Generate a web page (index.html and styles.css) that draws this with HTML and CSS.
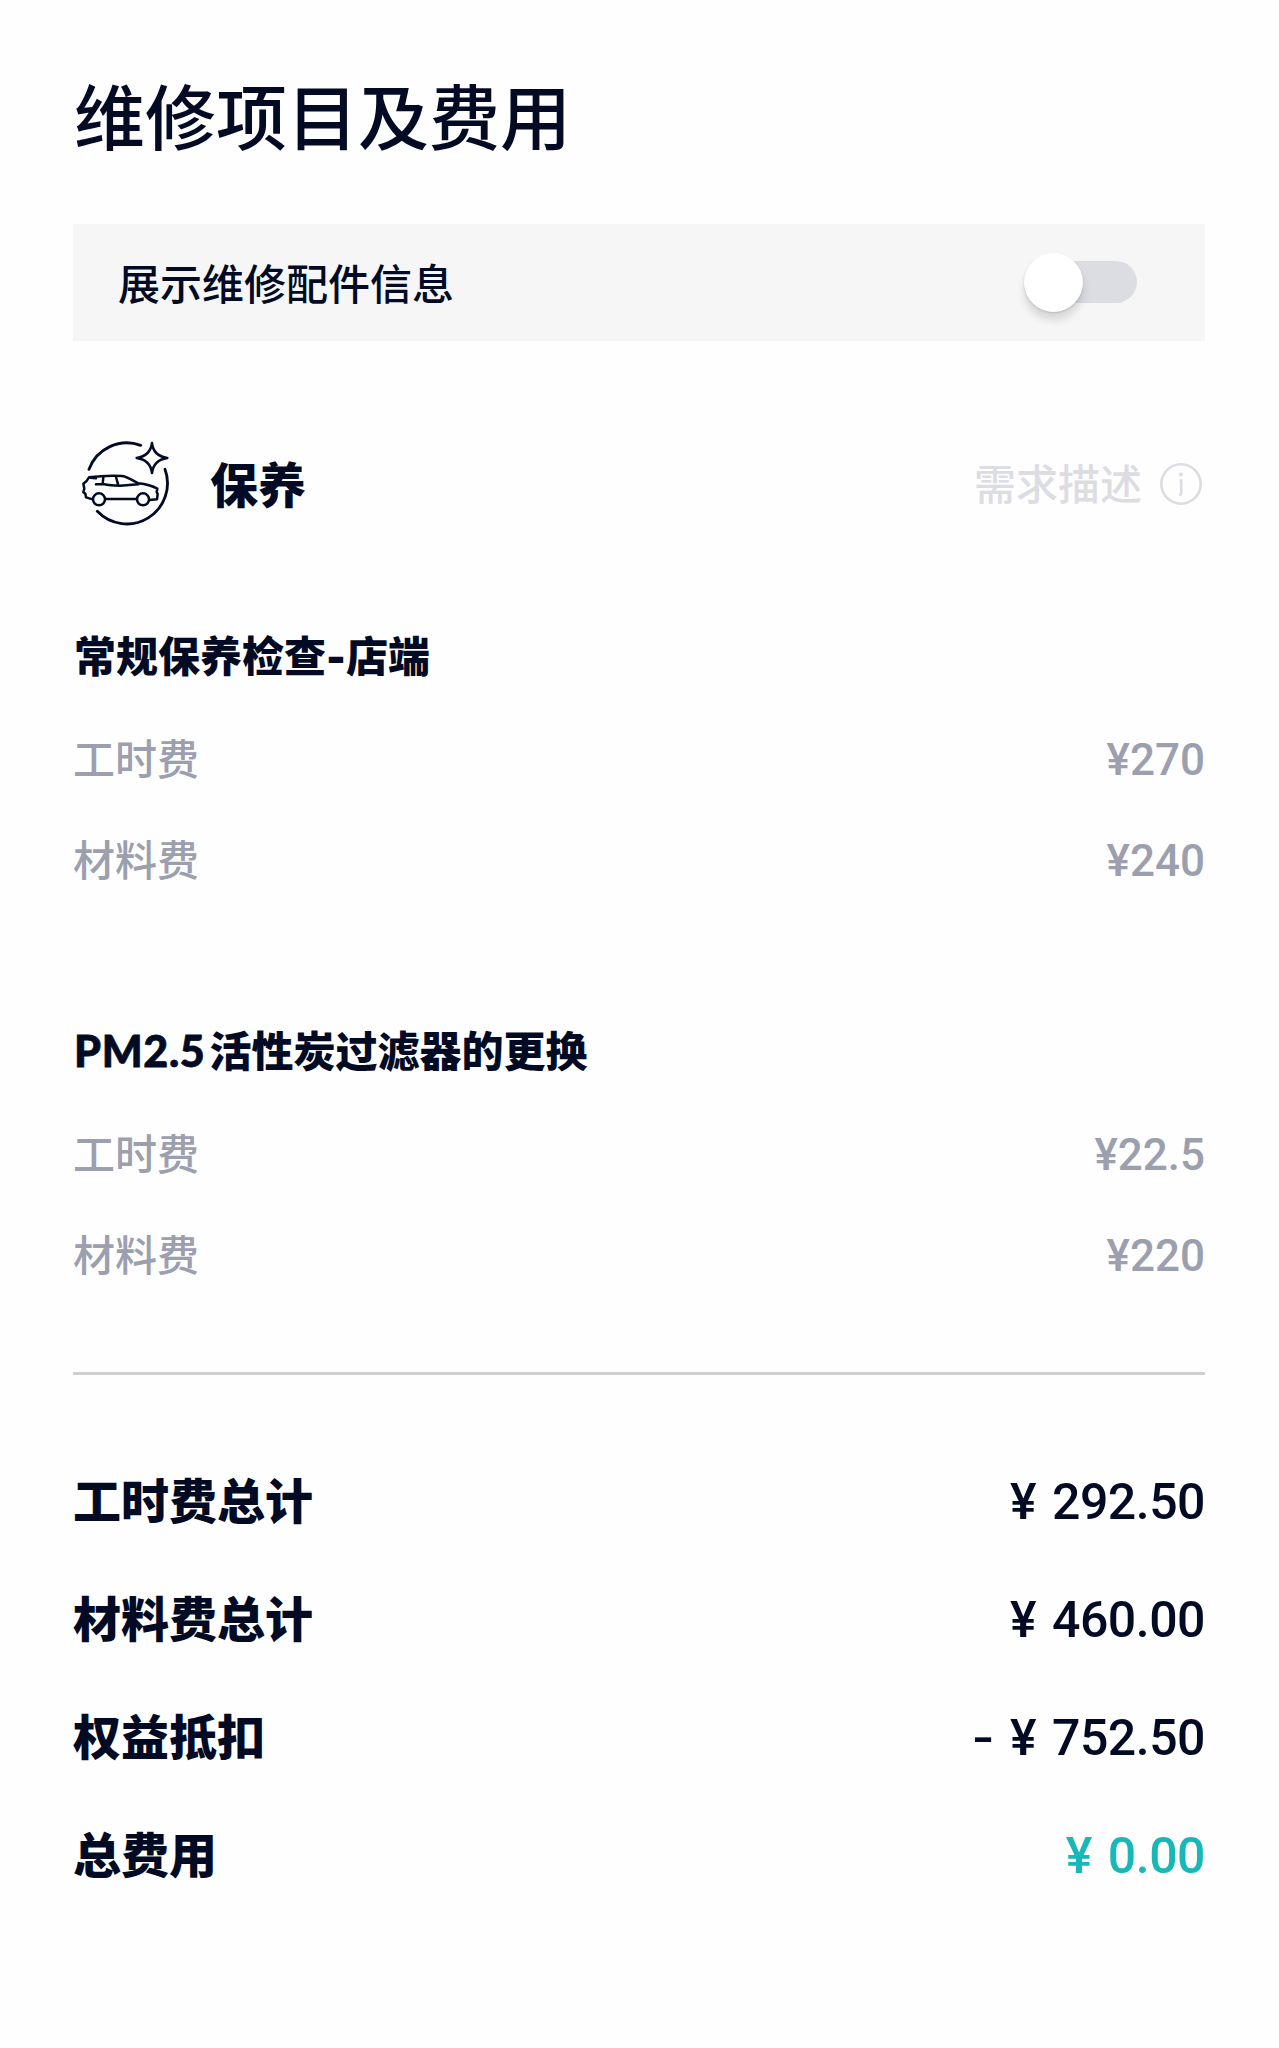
FILE: index.html
```html
<!DOCTYPE html>
<html lang="zh-CN">

<head>
  <meta charset="UTF-8">
  <meta name="viewport" content="width=device-width, initial-scale=1.0">
  <title>维修项目及费用</title>
  <link rel="stylesheet" href="styles.css">
</head>

<body>
  <main>
    <h1>维修项目及费用</h1>

    <div class="parts-bar">
      <span>展示维修配件信息</span>
      <span class="switch"><i class="knob"></i></span>
    </div>

    <section class="category">
      <svg class="car-icon" viewBox="60 60 264 264">
        <!-- ring -->
        <path d="M87 148A121 121 0 0 1 242 76M315 148A122 122 0 0 1 112 274" />
        <!-- star -->
        <path class="thin" d="M276 69Q280 108 322 114Q281 120 276 159Q271 120 230 114Q271 108 276 69Z" />
        <!-- car -->
        <path class="thin" d="M98 238L78 232L76 221L70 216L73 206L70 191L79 184L87 172Q140 165 186 168Q198 169 235 190Q270 194 292 206L290 216L293 222L291 238L269 240M137 237H229" />
        <path class="thin" d="M108 193L130 192Q150 197 180 197L235 193M130 171L128 192M168 171L175 196M90 173L108 175" />
        <circle class="thin" cx="117" cy="238" r="18" />
        <circle class="thin" cx="249" cy="238" r="18" />
      </svg>
      <h2>保养</h2>
      <div class="demand">
        <span>需求描述</span>
        <svg class="info-icon" viewBox="0 0 42 42">
          <circle cx="21" cy="21" r="19.7" />
          <path d="M19.5 17.5H21.2V30Q21.2 32 19.2 32" />
          <circle class="dot" cx="21" cy="11.5" r="2.1" />
        </svg>
      </div>
    </section>

    <section class="project">
      <h3>常规保养检查<span class="dash">-</span>店端</h3>
      <div class="fee"><span>工时费</span><span class="num">¥270</span></div>
      <div class="fee"><span>材料费</span><span class="num">¥240</span></div>
    </section>

    <section class="project">
      <h3><span class="latin">PM2.5</span>活性炭过滤器的更换</h3>
      <div class="fee"><span>工时费</span><span class="num">¥22.5</span></div>
      <div class="fee"><span>材料费</span><span class="num">¥220</span></div>
    </section>

    <section class="total">
      <div class="sum"><span class="name">工时费总计</span><span class="num">¥ 292.50</span></div>
      <div class="sum"><span class="name">材料费总计</span><span class="num">¥ 460.00</span></div>
      <div class="sum"><span class="name">权益抵扣</span><span class="num"><span class="dash">-</span> ¥ 752.50</span></div>
      <div class="sum"><span class="name">总费用</span><span class="num green">¥ 0.00</span></div>
    </section>
  </main>
</body>

</html>
```
FILE: styles.css
```css
* {
  box-sizing: border-box;
  margin: 0;
  padding: 0;
}

body {
  min-height: 2048px;
  background: #fefefe;
  color: #020a24;
  font-family: "Noto Sans CJK SC", sans-serif;
  font-size: 42px;
}

main {
  padding: 62px 74px 0 73px;
}

h1 {
  padding-left: 1px;
  font-size: 71px;
  font-weight: 500;
  line-height: 102px;
}

.parts-bar {
  display: flex;
  align-items: center;
  justify-content: space-between;
  height: 117px;
  margin-top: 60px;
  padding: 0 68px 2px 45px;
  background: #f6f6f7;
  font-weight: 500;
  line-height: 114px;
}

.switch {
  display: flex;
  align-items: center;
  width: 110px;
  height: 42px;
  border-radius: 21px;
  background: #dcdde3;
}

.knob {
  flex: none;
  width: 59px;
  height: 59px;
  margin: 1px 0 0 -3px;
  border-radius: 50%;
  background: #fff;
  box-shadow: 0 8px 9px rgba(0, 0, 0, .13), 0 1px 2px rgba(0, 0, 0, .15);
}

.category {
  display: flex;
  align-items: center;
  height: 88px;
  margin-top: 99px;
  padding-left: 7px;
}

.car-icon {
  width: 88px;
  height: 88px;
  overflow: visible;
  fill: none;
  stroke: #020a24;
  stroke-width: 8.5;
  stroke-linecap: round;
  stroke-linejoin: round;
}

.car-icon .thin {
  stroke-width: 7.5;
}

h2 {
  margin-left: 42px;
  padding-bottom: 5px;
  font-size: 48px;
  font-weight: 900;
  line-height: 70px;
}

.demand {
  display: flex;
  align-items: center;
  margin-left: auto;
  padding-right: 3px;
  color: #dcdde3;
  font-weight: 500;
  line-height: 60px;
}

.demand span {
  padding-bottom: 4px;
}

.info-icon {
  width: 42px;
  height: 42px;
  margin-left: 18px;
  fill: none;
  stroke: #dcdde3;
  stroke-width: 2.6;
}

.info-icon .dot {
  fill: #dcdde3;
  stroke: none;
}

.project {
  margin-top: 96px;
}

.project + .project {
  margin-top: 111px;
}

h3 {
  height: 60px;
  margin-bottom: 22px;
  padding-left: 1px;
  font-size: 42px;
  font-weight: 900;
  line-height: 60px;
}

.latin {
  margin-right: 4px;
  font-family: Lato, sans-serif;
  font-size: 43px;
  letter-spacing: .7px;
  -webkit-text-stroke: .8px #020a24;
}

.dash {
  font-family: Inter, sans-serif;
}

.fee,
.sum {
  display: flex;
  align-items: baseline;
  justify-content: space-between;
}

.fee {
  height: 101px;
  color: #9b9fae;
  font-weight: 500;
  line-height: 101px;
}

.num {
  font-family: Roboto, sans-serif;
  font-size: 44px;
  font-weight: 500;
}

.total {
  margin-top: 69px;
  padding-top: 64px;
  border-top: 3px solid #cdcfd3;
}

.sum {
  height: 118px;
  line-height: 118px;
}

.sum .name {
  font-size: 48px;
  font-weight: 900;
}

.sum .num {
  font-size: 50px;
  letter-spacing: -.5px;
  word-spacing: 4px;
}

.sum .green {
  color: #18b8b8;
}
```
